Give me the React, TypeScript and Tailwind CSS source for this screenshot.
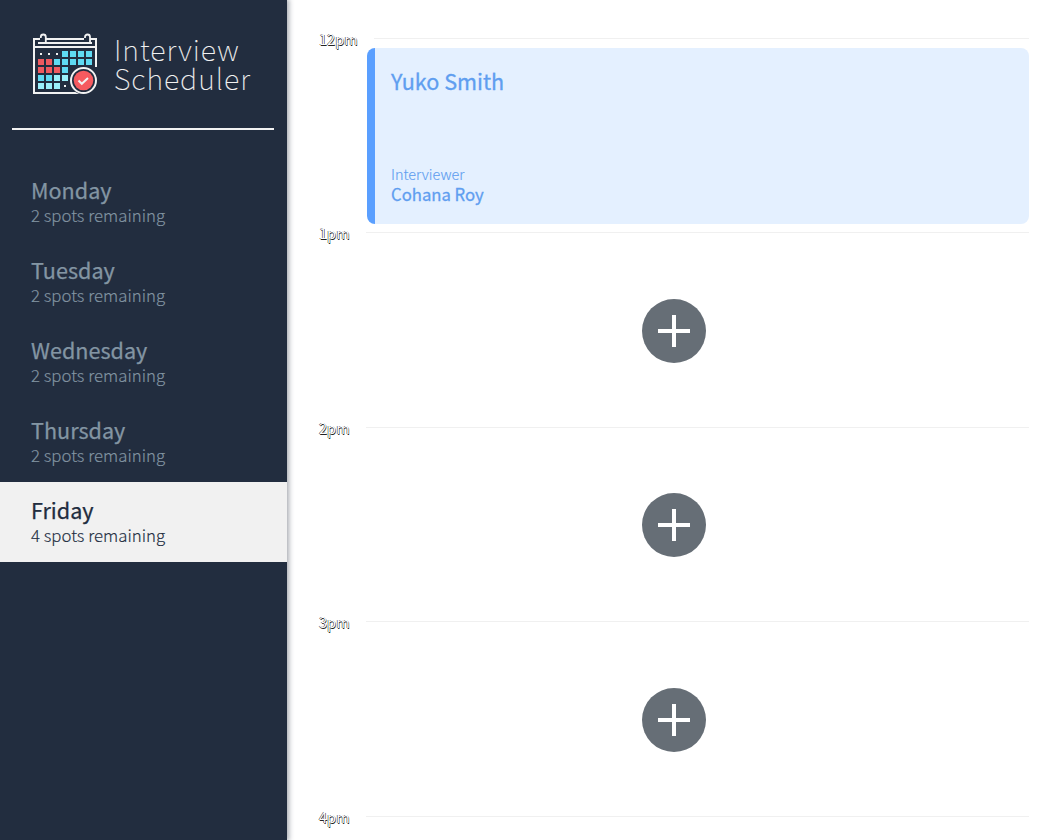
import React from "react";

const days = [
  { name: "Monday", spots: 2 },
  { name: "Tuesday", spots: 2 },
  { name: "Wednesday", spots: 2 },
  { name: "Thursday", spots: 2 },
  { name: "Friday", spots: 4 },
];

const C = "#5fdaf2";
const R = "#f0595f";
const L = "#9bf0fb";

const cells: [number, number, string][] = [
  [3, 0, C], [4, 0, C], [5, 0, C], [6, 0, C],
  [0, 1, R], [1, 1, R], [2, 1, C], [3, 1, C], [4, 1, C], [5, 1, C], [6, 1, C],
  [0, 2, R], [1, 2, R], [2, 2, R], [3, 2, C],
  [0, 3, C], [1, 3, C], [2, 3, L], [3, 3, L],
  [0, 4, L], [1, 4, L], [2, 4, L],
];

function CalendarIcon() {
  return (
    <svg width="66" height="62" viewBox="0 0 66 62" fill="none" className="block shrink-0">
      <path d="M50 60H2V6H8M14 6H52M58 6H64V34M2 14H64" stroke="#f2f2f2" strokeWidth="2" />
      <path d="M8.8 5V4a2.5 2.5 0 0 1 5 0V9M6 10H60M53 5V4a2.5 2.5 0 0 1 5 0V9" stroke="#f2f2f2" strokeWidth="1.8" />
      {[8, 16, 24].map((x) => (
        <rect key={x} x={x} y="20" width="2" height="2" fill="#f2f2f2" />
      ))}
      <rect x="32" y="52" width="2" height="2" fill="#f2f2f2" />
      {cells.map(([c, r, color]) => (
        <rect key={`${c}-${r}`} x={6 + c * 8} y={18 + r * 8} width="6" height="6" fill={color} />
      ))}
      <circle cx="51.5" cy="47.5" r="14" fill="#222d3f" />
      <circle cx="51.5" cy="47.5" r="12.5" stroke="#f2f2f2" strokeWidth="2" />
      <circle cx="51.5" cy="47.5" r="9.8" fill="#f65a5f" />
      <path d="M46.5 47.5l3.3 3.3 6.2-5.8" stroke="#f2f2f2" strokeWidth="2" />
    </svg>
  );
}

function Hour({ label, children }: { label: string; children?: React.ReactNode }) {
  return (
    <section className="h-[194.4px] shrink-0">
      <header className="flex h-[18px] items-center">
        <h4 className="text-[14.6px] leading-[18px] font-normal whitespace-nowrap text-white [text-shadow:-0.5px_-0.5px_0_#222,0.5px_0.5px_0_#222]">
          {label}
        </h4>
        <div className="mb-px ml-4 h-px flex-1 bg-[#f0f0f0]" />
      </header>
      <div className="ml-12 h-44">{children}</div>
    </section>
  );
}

function AddButton() {
  return (
    <div className="flex h-full items-center justify-center pt-px pr-12">
      <button aria-label="Add" className="flex size-16 items-center justify-center rounded-full bg-[#666e76]">
        <svg width="32" height="32" viewBox="0 0 32 32">
          <path d="M14 0h4v14h14v4H18v14h-4V18H0v-4h14z" fill="#fff" />
        </svg>
      </button>
    </div>
  );
}

export default function App() {
  return (
    <main className="flex h-[840px] w-[1060px] overflow-hidden bg-white font-['Noto_Sans_CJK_JP',sans-serif]">
      <aside className="z-10 flex w-[287px] shrink-0 flex-col bg-[#222d3f] shadow-[1px_0_5px_1px_rgba(34,45,63,0.4)]">
        <div className="flex h-32 items-start pt-[33px] pl-8">
          <CalendarIcon />
          <h1 className="ml-4 pt-px text-[28.8px] leading-[29px] font-thin tracking-[0.95px] text-[#f2f2f2] [-webkit-text-stroke:0.1px]">
            <span className="block">Interview</span>
            <span className="block">Scheduler</span>
          </h1>
        </div>
        <hr className="mr-[13px] ml-3 h-0.5 border-0 bg-[#f2f2f2]" />
        <ul className="mt-8">
          {days.map((d) => (
            <li
              key={d.name}
              className={`flex h-20 flex-col pt-[15px] pl-[31px] ${
                d.name === "Friday" ? "bg-[#f1f1f1] text-[#222d3f]" : "text-[#8395a3]"
              }`}
            >
              <h2 className="text-[21.6px] leading-[26px] font-normal [-webkit-text-stroke:0.25px]">{d.name}</h2>
              <h3 className="text-[16.8px] leading-6 font-light [-webkit-text-stroke:0.15px]">
                {d.spots} spots remaining
              </h3>
            </li>
          ))}
        </ul>
      </aside>
      <div className="flex flex-1 flex-col overflow-hidden pt-[30px] pr-[31px] pl-8">
        <Hour label="12pm">
          <article className="flex h-44 flex-col justify-between rounded-lg border-l-8 border-[#5a9fff] bg-[#e4f0ff] pt-[15px] pb-5 pl-4 text-[#5f9ef0]">
            <h2 className="pt-1 text-[21.6px] leading-7 font-normal [-webkit-text-stroke:0.3px]">Yuko Smith</h2>
            <div>
              <h4 className="text-[14.4px] leading-5 font-light [-webkit-text-stroke:0.15px]">Interviewer</h4>
              <h3 className="text-[16.7px] leading-5 font-normal [-webkit-text-stroke:0.3px]">Cohana Roy</h3>
            </div>
          </article>
        </Hour>
        <Hour label="1pm"><AddButton /></Hour>
        <Hour label="2pm"><AddButton /></Hour>
        <Hour label="3pm"><AddButton /></Hour>
        <Hour label="4pm" />
      </div>
    </main>
  );
}
